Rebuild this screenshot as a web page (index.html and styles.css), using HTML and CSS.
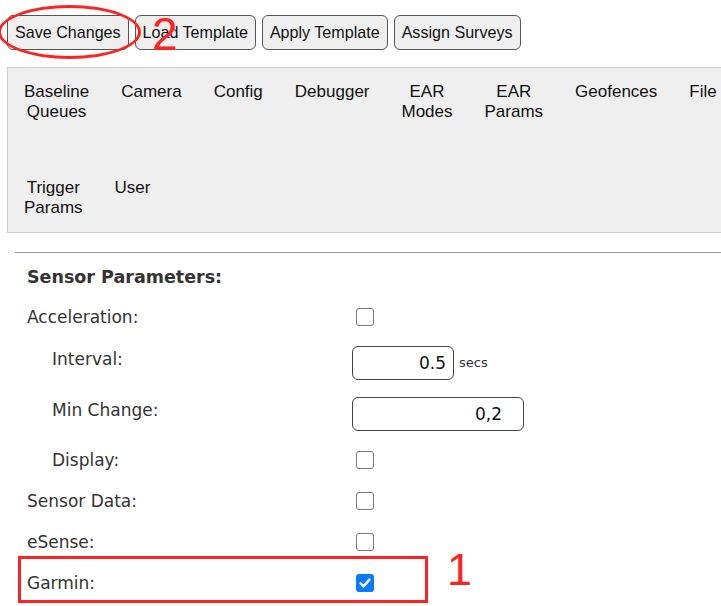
FILE: index.html
```html
<!DOCTYPE html>
<html lang="en">
<head>
    <meta charset="UTF-8">
    <meta name="viewport" content="width=device-width, initial-scale=1.0">
    <title>Sensor Parameters</title>
    <link rel="stylesheet" href="styles.css">
</head>
<body>
    <div class="page">
        <div class="toolbar">
            <button class="btn">Save Changes</button>
            <button class="btn">Load Template</button>
            <button class="btn">Apply Template</button>
            <button class="btn">Assign Surveys</button>
        </div>

        <nav class="tabs">
            <div class="tab">Baseline<br>Queues</div>
            <div class="tab">Camera</div>
            <div class="tab">Config</div>
            <div class="tab">Debugger</div>
            <div class="tab">EAR<br>Modes</div>
            <div class="tab">EAR<br>Params</div>
            <div class="tab">Geofences</div>
            <div class="tab">File</div>
            <div class="tab">Trigger<br>Params</div>
            <div class="tab">User</div>
        </nav>

        <hr class="rule">

        <section class="sensor-form">
            <h3 class="form-title">Sensor Parameters:</h3>
            <div class="row">
                <label>Acceleration:</label>
                <span class="check"></span>
            </div>
            <div class="row row-input">
                <label class="sub">Interval:</label>
                <div class="control">
                    <input class="field field-short" type="text" value="0.5">
                    <span class="unit">secs</span>
                </div>
            </div>
            <div class="row row-input">
                <label class="sub">Min Change:</label>
                <div class="control">
                    <input class="field field-long" type="text" value="0,2">
                </div>
            </div>
            <div class="row">
                <label class="sub">Display:</label>
                <span class="check"></span>
            </div>
            <div class="row">
                <label>Sensor Data:</label>
                <span class="check"></span>
            </div>
            <div class="row">
                <label>eSense:</label>
                <span class="check"></span>
            </div>
            <div class="row">
                <label>Garmin:</label>
                <span class="check checked">
                    <svg width="18" height="18" viewBox="0 0 18 18"><path d="M4.6 9.4 L7.6 12.4 L13.4 5.6" fill="none" stroke="#fff" stroke-width="2.4" stroke-linecap="round" stroke-linejoin="round"/></svg>
                </span>
            </div>
        </section>

        <!-- annotation marks drawn over the screenshot -->
        <span class="mark-ellipse"></span>
        <span class="mark-num mark-two">2</span>
        <span class="mark-box"></span>
        <span class="mark-num mark-one">1</span>
    </div>
</body>
</html>
```

FILE: styles.css
```css
body {
    margin: 0;
    overflow: hidden;
    background: #fff;
    font-family: "Liberation Sans", Arial, sans-serif;
}
.page {
    position: relative;
    padding: 15px 0 0 7px;
}
.toolbar {
    display: flex;
    gap: 6px;
}
.btn {
    height: 35px;
    padding: 0 7px;
    font-family: "Liberation Sans", Arial, sans-serif;
    font-size: 16.1px;
    color: #111;
    background: #efefef;
    border: 1px solid #555;
    border-radius: 6px;
}
.tabs {
    display: flex;
    flex-wrap: wrap;
    align-items: flex-start;
    row-gap: 28px;
    width: 740px;
    margin-top: 17px;
    background: #efefef;
    border: 1px solid #ccc;
}
.tab {
    padding: 14px 16px;
    font-size: 17px;
    line-height: 20px;
    text-align: center;
    color: #111;
}
.rule {
    margin: 19px 0 0 8px;
    border: none;
    border-top: 1px solid #999;
}
.sensor-form {
    padding-left: 20px;
    font-family: "DejaVu Sans", Verdana, sans-serif;
    color: #333;
}
.form-title {
    margin: 3px 0 0;
    padding-top: 3px;
    height: 37px;
    line-height: 37px;
    font-size: 17.5px;
    font-weight: bold;
}
.row {
    display: grid;
    grid-template-columns: 325px auto;
    align-items: center;
    height: 41px;
    font-size: 17px;
}
.row-input {
    height: 51px;
}
.row-input label {
    padding-bottom: 7px;
}
.sub {
    padding-left: 25px;
}
.check {
    display: block;
    width: 18px;
    height: 18px;
    margin-left: 4px;
    box-sizing: border-box;
    border: 1px solid #777;
    border-radius: 3px;
    background: #fff;
}
.check.checked {
    border: none;
    background: #0a7aff;
}
.check svg {
    display: block;
}
.control {
    display: flex;
    align-items: center;
}
.field {
    box-sizing: border-box;
    height: 34px;
    padding: 0 7px;
    font-family: "DejaVu Sans", Verdana, sans-serif;
    font-size: 17px;
    color: #111;
    text-align: right;
    border: 1px solid #444;
    border-radius: 6px;
    background: #fff;
}
.field-short {
    width: 102px;
}
.field-long {
    width: 172px;
    padding-right: 21px;
}
.unit {
    margin-left: 5px;
    font-size: 13px;
    color: #333;
}
.mark-ellipse {
    position: absolute;
    left: -2px;
    top: 5px;
    width: 143px;
    height: 54px;
    box-sizing: border-box;
    border: 3px solid #f22;
    border-radius: 50%;
}
.mark-num {
    position: absolute;
    font-family: "Liberation Sans", Arial, sans-serif;
    line-height: 1;
    color: #f22;
}
.mark-two {
    left: 152px;
    top: 11px;
    font-size: 46px;
}
.mark-one {
    left: 447px;
    top: 547px;
    font-size: 45px;
}
.mark-box {
    position: absolute;
    left: 18px;
    top: 556px;
    width: 410px;
    height: 47px;
    box-sizing: border-box;
    border: 3px solid #f22;
}
```
